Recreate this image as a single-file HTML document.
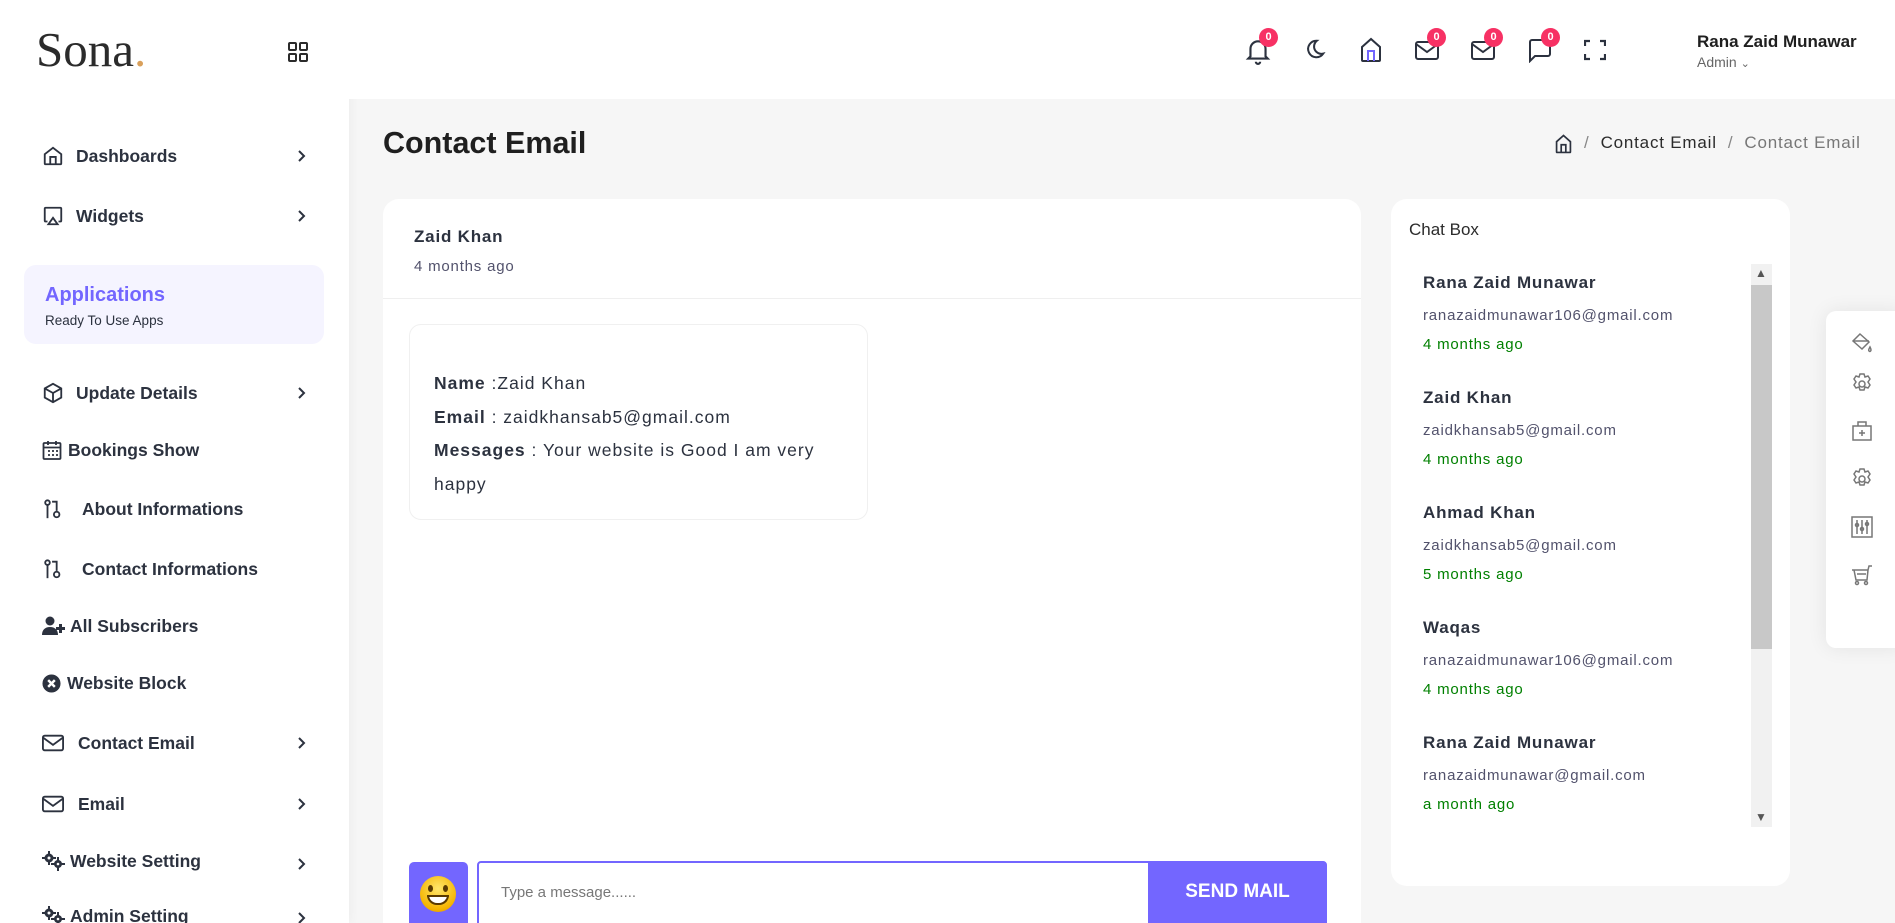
<!DOCTYPE html>
<html><head><meta charset="utf-8">
<style>
*{box-sizing:border-box;margin:0;padding:0}
html{width:1895px;height:923px;overflow:hidden}
body{width:1895px;height:923px;overflow:hidden;background:#f6f6f6;font-family:"Liberation Sans",sans-serif;color:#2b2b2b;position:relative}
.abs{position:absolute}
.side{left:0;top:0;width:349px;height:923px;background:#fff;box-shadow:2px 0 10px rgba(0,0,0,.04)}
.hdr{left:349px;top:0;width:1546px;height:99px;background:#fff}
.mi{position:absolute;left:42px;font-size:17.5px;font-weight:bold;color:#2c323f;display:flex;align-items:center;gap:12px;height:24px;transform:translateY(-50%)}
.chev{position:absolute;left:296px;transform:translateY(-50%)}
.badge{position:absolute;width:19px;height:19px;border-radius:50%;background:#f73164;color:#fff;font-size:11px;font-weight:bold;text-align:center;line-height:19px}
.card{background:#fff;border-radius:16px}
.en{position:absolute;left:1423px}
.en b{display:block;font-size:17px;color:#2c323f;letter-spacing:.8px}
.en .m{font-size:15px;color:#52526c;letter-spacing:.8px;margin-top:14px}
.en .t{font-size:15px;color:#008000;letter-spacing:.8px;margin-top:12px}
svg{display:block}
</style></head><body>
<div class="abs side"></div>
<div class="abs hdr"></div>
<div class="abs" style="left:36px;top:21px;font-family:'Liberation Serif',serif;font-size:49px;color:#2b2b2b">Sona<span style="color:#d9a05b">.</span></div>
<svg class="abs" style="left:288px;top:42px" width="20" height="20" viewBox="0 0 20 20" fill="none" stroke="#2b2b2b" stroke-width="2"><rect x="1" y="1" width="7" height="7" rx="1"/><rect x="12" y="1" width="7" height="7" rx="1"/><rect x="1" y="12" width="7" height="7" rx="1"/><rect x="12" y="12" width="7" height="7" rx="1"/></svg>

<div class="mi" style="top:156px"><svg width="22" height="22" viewBox="0 0 24 24" fill="none" stroke="#2c323f" stroke-width="2"><path d="M3 10l9-7 9 7v10a1 1 0 0 1-1 1H4a1 1 0 0 1-1-1z"/><path d="M9 21v-8h6v8"/></svg>Dashboards</div>
<svg class="chev" style="top:156px" width="10" height="14" viewBox="0 0 10 14"><path d="M3 2l5 5-5 5" stroke="#2c323f" stroke-width="2" fill="none"/></svg>
<div class="mi" style="top:216px"><svg width="22" height="22" viewBox="0 0 24 24" fill="none" stroke="#2c323f" stroke-width="2"><path d="M6 18H4a1 1 0 0 1-1-1V4a1 1 0 0 1 1-1h16a1 1 0 0 1 1 1v13a1 1 0 0 1-1 1h-2"/><path d="M12 14l5 7H7z"/></svg>Widgets</div>
<svg class="chev" style="top:216px" width="10" height="14" viewBox="0 0 10 14"><path d="M3 2l5 5-5 5" stroke="#2c323f" stroke-width="2" fill="none"/></svg>
<div class="abs" style="left:24px;top:265px;width:300px;height:79px;background:#f5f4ff;border-radius:12px"></div>
<div class="abs" style="left:45px;top:284px;font-size:20px;font-weight:bold;color:#7366ff">Applications</div>
<div class="abs" style="left:45px;top:313px;font-size:13.5px;color:#2c323f">Ready To Use Apps</div>
<div class="mi" style="top:393px"><svg width="22" height="22" viewBox="0 0 24 24" fill="none" stroke="#2c323f" stroke-width="2"><path d="M12 2l9 5v10l-9 5-9-5V7z"/><path d="M3 7l9 5 9-5M12 12v10"/></svg>Update Details</div>
<svg class="chev" style="top:393px" width="10" height="14" viewBox="0 0 10 14"><path d="M3 2l5 5-5 5" stroke="#2c323f" stroke-width="2" fill="none"/></svg>
<div class="mi" style="top:450px;gap:6px"><svg width="20" height="20" viewBox="0 0 20 20" fill="none" stroke="#2c323f" stroke-width="1.8"><rect x="1.5" y="3" width="17" height="16" rx="1"/><path d="M1.5 7.5h17M6 1v4M14 1v4M6 11h2M10 11h2M14 11h2M6 15h2M10 15h2M14 15h2"/></svg>Bookings Show</div>
<div class="mi" style="top:509px;gap:18px"><svg width="22" height="22" viewBox="0 0 24 24" fill="none" stroke="#2c323f" stroke-width="2"><circle cx="6" cy="5" r="2.5"/><path d="M6 8v14"/><path d="M11 4h5v10"/><circle cx="16" cy="18" r="3"/></svg>About Informations</div>
<div class="mi" style="top:569px;gap:18px"><svg width="22" height="22" viewBox="0 0 24 24" fill="none" stroke="#2c323f" stroke-width="2"><circle cx="6" cy="5" r="2.5"/><path d="M6 8v14"/><path d="M11 4h5v10"/><circle cx="16" cy="18" r="3"/></svg>Contact Informations</div>
<div class="mi" style="top:626px;gap:4px"><svg width="24" height="20" viewBox="0 0 24 20" fill="#2c323f"><circle cx="8" cy="5" r="4.5"/><path d="M0 19c0-5 3-8 8-8s8 3 8 8z"/><path d="M17 8h3v3h3v3h-3v3h-3v-3h-3v-3h3z"/></svg>All Subscribers</div>
<div class="mi" style="top:683px;gap:6px"><svg width="19" height="19" viewBox="0 0 20 20"><circle cx="10" cy="10" r="9.5" fill="#2c323f"/><path d="M6.5 6.5l7 7M13.5 6.5l-7 7" stroke="#fff" stroke-width="2.6"/></svg>Website Block</div>
<div class="mi" style="top:743px;gap:14px"><svg width="22" height="20" viewBox="0 0 24 20" fill="none" stroke="#2c323f" stroke-width="2"><rect x="1" y="2" width="22" height="16" rx="2"/><path d="M1 4l11 8 11-8"/></svg>Contact Email</div>
<svg class="chev" style="top:743px" width="10" height="14" viewBox="0 0 10 14"><path d="M3 2l5 5-5 5" stroke="#2c323f" stroke-width="2" fill="none"/></svg>
<div class="mi" style="top:804px;gap:14px"><svg width="22" height="20" viewBox="0 0 24 20" fill="none" stroke="#2c323f" stroke-width="2"><rect x="1" y="2" width="22" height="16" rx="2"/><path d="M1 4l11 8 11-8"/></svg>Email</div>
<svg class="chev" style="top:804px" width="10" height="14" viewBox="0 0 10 14"><path d="M3 2l5 5-5 5" stroke="#2c323f" stroke-width="2" fill="none"/></svg>
<div class="mi" style="top:861px;gap:4px"><svg width="24" height="20" viewBox="0 0 24 20" fill="#2c323f"><circle cx="7" cy="7" r="4.5"/><circle cx="16" cy="13" r="4"/><path d="M6 0h2v14H6zM0 6h14v2H0zM15 6h2v14h-2zM9 12h14v2H9z"/><circle cx="7" cy="7" r="1.5" fill="#fff"/><circle cx="16" cy="13" r="1.3" fill="#fff"/></svg>Website Setting</div>
<svg class="chev" style="top:864px" width="10" height="14" viewBox="0 0 10 14"><path d="M3 2l5 5-5 5" stroke="#2c323f" stroke-width="2" fill="none"/></svg>
<div class="mi" style="top:916px;gap:4px"><svg width="24" height="20" viewBox="0 0 24 20" fill="#2c323f"><circle cx="7" cy="7" r="4.5"/><circle cx="16" cy="13" r="4"/><path d="M6 0h2v14H6zM0 6h14v2H0zM15 6h2v14h-2zM9 12h14v2H9z"/><circle cx="7" cy="7" r="1.5" fill="#fff"/><circle cx="16" cy="13" r="1.3" fill="#fff"/></svg>Admin Setting</div>
<svg class="chev" style="top:918px" width="10" height="14" viewBox="0 0 10 14"><path d="M3 2l5 5-5 5" stroke="#2c323f" stroke-width="2" fill="none"/></svg>

<svg class="abs" style="left:1245px;top:37px" width="26" height="28" viewBox="0 0 24 26" fill="none" stroke="#2c323f" stroke-width="2"><path d="M5 18V11a7 7 0 0 1 14 0v7l2 2H3z"/><path d="M10 23a2 2 0 0 0 4 0"/></svg>
<div class="badge" style="left:1259px;top:28px">0</div>
<svg class="abs" style="left:1304px;top:38px" width="22" height="22" viewBox="0 0 24 24" fill="none" stroke="#2c323f" stroke-width="2.2"><path d="M14 3a9 9 0 1 0 7 14A8 8 0 0 1 14 3z"/></svg>
<svg class="abs" style="left:1359px;top:37px" width="24" height="26" viewBox="0 0 24 26" fill="none" stroke="#2c323f" stroke-width="2"><path d="M3 10l9-8 9 8v13a1 1 0 0 1-1 1H4a1 1 0 0 1-1-1z"/><path d="M9 24V14h6v10" stroke="#7366ff"/></svg>
<svg class="abs" style="left:1415px;top:40px" width="24" height="20" viewBox="0 0 24 20" fill="none" stroke="#2c323f" stroke-width="2"><rect x="1" y="2" width="22" height="17" rx="2"/><path d="M1 4l11 8 11-8"/></svg>
<div class="badge" style="left:1427px;top:28px">0</div>
<svg class="abs" style="left:1471px;top:40px" width="24" height="20" viewBox="0 0 24 20" fill="none" stroke="#2c323f" stroke-width="2"><rect x="1" y="2" width="22" height="17" rx="2"/><path d="M1 4l11 8 11-8"/></svg>
<div class="badge" style="left:1484px;top:28px">0</div>
<svg class="abs" style="left:1529px;top:39px" width="22" height="24" viewBox="0 0 22 24" fill="none" stroke="#2c323f" stroke-width="2"><path d="M1 3a2 2 0 0 1 2-2h16a2 2 0 0 1 2 2v12a2 2 0 0 1-2 2H6l-5 5z"/></svg>
<div class="badge" style="left:1541px;top:28px">0</div>
<svg class="abs" style="left:1584px;top:39px" width="22" height="22" viewBox="0 0 22 22" fill="none" stroke="#2c323f" stroke-width="2.2"><path d="M1 7V2h5M16 2h5v5M21 15v5h-5M6 20H1v-5"/></svg>
<div class="abs" style="left:1697px;top:32px;font-size:17px;font-weight:bold;color:#1f1f1f">Rana Zaid Munawar</div>
<div class="abs" style="left:1697px;top:54px;font-size:14px;color:#666">Admin <span style="font-size:11px">&#8964;</span></div>

<div class="abs" style="left:383px;top:126px;font-size:30.5px;font-weight:bold;color:#1f1f1f">Contact Email</div>
<svg class="abs" style="left:1554px;top:134px" width="19" height="20" viewBox="0 0 24 26" fill="none" stroke="#2c323f" stroke-width="2.2"><path d="M3 10l9-8 9 8v13a1 1 0 0 1-1 1H4a1 1 0 0 1-1-1z"/><path d="M9 24V14h6v10"/></svg>
<div class="abs" style="left:1584px;top:133px;font-size:17px;color:#2b2b2b;letter-spacing:.8px"><span style="color:#888">/</span>&nbsp;&nbsp;Contact Email&nbsp;&nbsp;<span style="color:#888">/</span>&nbsp;&nbsp;<span style="color:#777">Contact Email</span></div>

<div class="abs card" style="left:383px;top:199px;width:978px;height:724px;border-radius:16px 16px 0 0"></div>
<div class="abs" style="left:414px;top:227px;font-size:17px;font-weight:bold;color:#2c323f;letter-spacing:.8px">Zaid Khan</div>
<div class="abs" style="left:414px;top:258px;font-size:15px;color:#52526c;letter-spacing:.8px">4 months ago</div>
<div class="abs" style="left:383px;top:298px;width:978px;height:1px;background:#efefef"></div>
<div class="abs" style="left:409px;top:324px;width:459px;height:196px;border:1px solid #f0f0f0;border-radius:12px"></div>
<div class="abs" style="left:434px;top:367px;font-size:17.5px;color:#2c323f;letter-spacing:1px;line-height:33.5px;width:420px"><b>Name</b> :Zaid Khan<br><b>Email</b> : zaidkhansab5@gmail.com<br><b>Messages</b> : Your website is Good I am very happy</div>
<div class="abs" style="left:409px;top:862px;width:59px;height:70px;background:#7366ff;border-radius:5px"></div>
<div class="abs" style="left:420px;top:876px;width:36px;height:36px;border-radius:50%;background:radial-gradient(circle at 50% 35%,#ffe66b,#f5b400 70%,#d98a00)"></div>
<div class="abs" style="left:428px;top:885px;width:5px;height:7px;background:#5a3a00;border-radius:50%"></div>
<div class="abs" style="left:443px;top:885px;width:5px;height:7px;background:#5a3a00;border-radius:50%"></div>
<div class="abs" style="left:427px;top:895px;width:22px;height:10px;background:#fff;border:2px solid #5a3a00;border-radius:0 0 11px 11px"></div>
<div class="abs" style="left:477px;top:861px;width:850px;height:70px;border:2px solid #7366ff;border-radius:4px;background:#fff"></div>
<div class="abs" style="left:501px;top:884px;font-size:15px;color:#777">Type a message......</div>
<div class="abs" style="left:1148px;top:861px;width:179px;height:70px;background:#7366ff;border-radius:0 5px 5px 0;color:#fff;font-size:19px;font-weight:bold;text-align:center;line-height:62px">SEND MAIL</div>

<div class="abs card" style="left:1391px;top:199px;width:399px;height:687px"></div>
<div class="abs" style="left:1409px;top:220px;font-size:17px;color:#2b2b2b">Chat Box</div>
<div class="abs" style="left:1751px;top:264px;width:21px;height:563px;background:#f1f1f1"></div>
<div class="abs" style="left:1751px;top:285px;width:21px;height:364px;background:#c8c8c8"></div>
<div class="abs" style="left:1755px;top:266px;font-size:12px;color:#555">&#9650;</div>
<div class="abs" style="left:1755px;top:810px;font-size:12px;color:#555">&#9660;</div>
<div class="en" style="top:273px"><b>Rana Zaid Munawar</b><div class="m">ranazaidmunawar106@gmail.com</div><div class="t">4 months ago</div></div>
<div class="en" style="top:388px"><b>Zaid Khan</b><div class="m">zaidkhansab5@gmail.com</div><div class="t">4 months ago</div></div>
<div class="en" style="top:503px"><b>Ahmad Khan</b><div class="m">zaidkhansab5@gmail.com</div><div class="t">5 months ago</div></div>
<div class="en" style="top:618px"><b>Waqas</b><div class="m">ranazaidmunawar106@gmail.com</div><div class="t">4 months ago</div></div>
<div class="en" style="top:733px"><b>Rana Zaid Munawar</b><div class="m">ranazaidmunawar@gmail.com</div><div class="t">a month ago</div></div>

<div class="abs" style="left:1826px;top:311px;width:80px;height:337px;background:#fff;border-radius:10px;box-shadow:0 0 20px rgba(0,0,0,.08)"></div>
<svg class="abs" style="left:1851px;top:332px" width="22" height="22" viewBox="0 0 22 22" fill="none" stroke="#777" stroke-width="1.5"><path d="M9 2l9 8-7 7-9-8z"/><path d="M2 9h16"/><path d="M19 15c-1 2-2 3-1 4s2 0 2-1-1-3-1-3z"/></svg>
<svg class="abs" style="left:1851px;top:373px" width="22" height="22" viewBox="0 0 22 22" fill="none" stroke="#777" stroke-width="1.5"><circle cx="11" cy="11" r="3"/><path d="M9 1h4l1 3 3-1 2 3-2 3 2 3-2 3-3-1-1 3H9l-1-3-3 1-2-3 2-3-2-3 2-3 3 1z"/></svg>
<svg class="abs" style="left:1851px;top:420px" width="22" height="22" viewBox="0 0 22 22" fill="none" stroke="#777" stroke-width="1.5"><rect x="2" y="6" width="18" height="14"/><path d="M7 6V2h8v4M11 10v6M8 13h6"/></svg>
<svg class="abs" style="left:1851px;top:468px" width="22" height="22" viewBox="0 0 22 22" fill="none" stroke="#777" stroke-width="1.5"><circle cx="11" cy="11" r="3"/><path d="M9 1h4l1 3 3-1 2 3-2 3 2 3-2 3-3-1-1 3H9l-1-3-3 1-2-3 2-3-2-3 2-3 3 1z"/></svg>
<svg class="abs" style="left:1851px;top:516px" width="22" height="22" viewBox="0 0 22 22" fill="none" stroke="#777" stroke-width="1.5"><rect x="1" y="1" width="20" height="20"/><path d="M6 4v14M11 4v14M16 4v14"/><circle cx="6" cy="9" r="1.5"/><circle cx="11" cy="13" r="1.5"/><circle cx="16" cy="8" r="1.5"/></svg>
<svg class="abs" style="left:1851px;top:564px" width="22" height="22" viewBox="0 0 22 22" fill="none" stroke="#777" stroke-width="1.5"><path d="M1 6h16l1-4h3M3 6l2 10h11l1-10M6 10h9"/><circle cx="6" cy="19" r="1.5"/><circle cx="15" cy="19" r="1.5"/></svg>
</body></html>
